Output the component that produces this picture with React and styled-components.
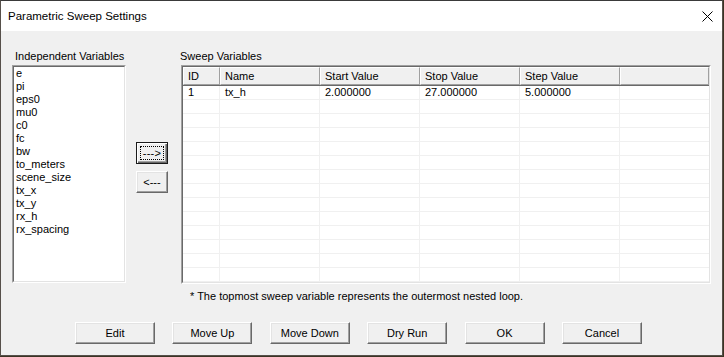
import React from 'react';
import styled, { createGlobalStyle } from 'styled-components';

const GlobalStyle = createGlobalStyle`
  html, body {
    margin: 0;
    padding: 0;
    background: #3b3424;
  }
  body {
    font-family: "Liberation Sans", Arial, sans-serif;
    font-size: 11px;
    color: #000;
  }
`;

const Window = styled.div`
  width: 723px;
  height: 356px;
  box-sizing: border-box;
  border: 1px solid #56504a;
  border-top-color: #3a3a3a;
  background: #f0f0f0;
  display: flex;
  flex-direction: column;
`;

const TitleBar = styled.div`
  height: 30px;
  background: #fff;
  display: flex;
  align-items: center;
  justify-content: space-between;
  padding: 0 9px 0 7px;
  font-size: 11.5px;
`;

const CloseIcon = () => (
  <svg width="11" height="11" viewBox="0 0 11 11">
    <path d="M0.5 0.5 L10.5 10.5 M10.5 0.5 L0.5 10.5" stroke="#000" strokeWidth="1" fill="none" />
  </svg>
);

const Content = styled.div`
  padding: 19px 12px 0 11px;
  display: flex;
  flex-direction: column;
`;

const Panels = styled.div`
  display: grid;
  grid-template-columns: 114px 55px 530px;
  align-items: start;
`;

const Column = styled.div`
  display: flex;
  flex-direction: column;
`;

const Label = styled.div`
  line-height: 13px;
  height: 13px;
  margin: 0 0 2px ${p => p.$indent || 0}px;
  white-space: nowrap;
`;

/* classic sunken frame: outer + inner edge */
const Sunken = styled.div`
  box-sizing: border-box;
  height: ${p => p.$h}px;
  border: 1px solid;
  border-color: #a0a0a0 #fff #fff #a0a0a0;
  display: flex;
`;

const SunkenInner = styled.div`
  flex: 1;
  border: 1px solid;
  border-color: #696969 #e3e3e3 #e3e3e3 #696969;
  background: #fff;
  overflow: hidden;
  display: flex;
  flex-direction: column;
`;

const ListItem = styled.div`
  line-height: 13px;
  height: 13px;
  padding-left: 2px;
  white-space: nowrap;
`;

const ArrowColumn = styled.div`
  display: flex;
  flex-direction: column;
  gap: 7px;
  padding: 92px 0 0 10px;
`;

const ButtonBase = styled.button`
  box-sizing: border-box;
  width: ${p => p.$w}px;
  height: 22px;
  padding: 0;
  margin: 0;
  background: #f0f0f0;
  font-family: "Liberation Sans", Arial, sans-serif;
  font-size: 11px;
  color: #000;
  border: 1px solid;
  border-color: #fff #696969 #696969 #fff;
  box-shadow: inset -1px -1px 0 #a0a0a0, inset 1px 1px 0 #e3e3e3;
  display: flex;
  align-items: center;
  justify-content: center;
`;

const DefaultButton = styled(ButtonBase)`
  border-color: #1a1a1a;
  box-shadow: inset 1px 1px 0 #fff, inset -1px -1px 0 #696969, inset -2px -2px 0 #a0a0a0;
`;

const FocusRect = styled.span`
  box-sizing: border-box;
  width: 24px;
  height: 14px;
  border: 1px dotted #000;
  display: flex;
  align-items: center;
  justify-content: center;
  line-height: 12px;
  letter-spacing: 0.3px;
`;

const Table = styled.div`
  display: flex;
  flex-direction: column;
  height: 100%;
`;

const cols = '37px 100px 100px 100px 100px 1fr';

const HeaderRow = styled.div`
  display: grid;
  grid-template-columns: ${cols};
  height: 18px;
  flex-shrink: 0;
`;

const HeaderCell = styled.div`
  box-sizing: border-box;
  background: #f0f0f0;
  border-top: 1px solid #fff;
  border-left: 1px solid #fff;
  border-right: 1px solid #a0a0a0;
  border-bottom: 1px solid #a0a0a0;
  box-shadow: 1px 0 0 #696969, 0 1px 0 #696969;
  padding-left: 4px;
  line-height: 16px;
  white-space: nowrap;
  position: relative;
`;

const Body = styled.div`
  padding-top: 1px;
`;

const Row = styled.div`
  display: grid;
  grid-template-columns: ${cols};
  height: 14px;
  box-sizing: border-box;
  border-bottom: 1px solid #f0f0f0;
`;

const Cell = styled.div`
  border-right: 1px solid #f0f0f0;
  padding-left: 5px;
  line-height: 13px;
  white-space: nowrap;
  &:last-child {
    border-right: none;
  }
`;

const Note = styled.div`
  margin: 6px 0 0 9px;
  line-height: 13px;
  white-space: nowrap;
`;

const Footer = styled.div`
  display: flex;
  gap: 17.4px;
  padding-left: 63px;
  margin-top: 19px;
`;

const variables = [
  'e', 'pi', 'eps0', 'mu0', 'c0', 'fc', 'bw', 'to_meters',
  'scene_size', 'tx_x', 'tx_y', 'rx_h', 'rx_spacing',
];

const headers = ['ID', 'Name', 'Start Value', 'Stop Value', 'Step Value', ''];

const rows = [['1', 'tx_h', '2.000000', '27.000000', '5.000000', '']];
while (rows.length < 15) rows.push(['', '', '', '', '', '']);

const footerButtons = ['Edit', 'Move Up', 'Move Down', 'Dry Run', 'OK', 'Cancel'];

export default function App() {
  return (
    <>
      <GlobalStyle />
      <Window>
        <TitleBar>
          <span>Parametric Sweep Settings</span>
          <CloseIcon />
        </TitleBar>
        <Content>
          <Panels>
            <Column>
              <Label $indent={3}>Independent Variables</Label>
              <Sunken $h={218}>
                <SunkenInner>
                  {variables.map(v => (
                    <ListItem key={v}>{v}</ListItem>
                  ))}
                </SunkenInner>
              </Sunken>
            </Column>
            <ArrowColumn>
              <DefaultButton $w={32}>
                <FocusRect>---&gt;</FocusRect>
              </DefaultButton>
              <ButtonBase $w={32}>&lt;---</ButtonBase>
            </ArrowColumn>
            <Column>
              <Label $indent={-1}>Sweep Variables</Label>
              <Sunken $h={219}>
                <SunkenInner>
                  <Table>
                    <HeaderRow>
                      {headers.map((h, i) => (
                        <HeaderCell key={i}>{h}</HeaderCell>
                      ))}
                    </HeaderRow>
                    <Body>
                      {rows.map((r, i) => (
                        <Row key={i}>
                          {r.map((c, j) => (
                            <Cell key={j}>{c}</Cell>
                          ))}
                        </Row>
                      ))}
                    </Body>
                  </Table>
                </SunkenInner>
              </Sunken>
              <Note>* The topmost sweep variable represents the outermost nested loop.</Note>
            </Column>
          </Panels>
          <Footer>
            {footerButtons.map(b => (
              <ButtonBase key={b} $w={80}>{b}</ButtonBase>
            ))}
          </Footer>
        </Content>
      </Window>
    </>
  );
}
